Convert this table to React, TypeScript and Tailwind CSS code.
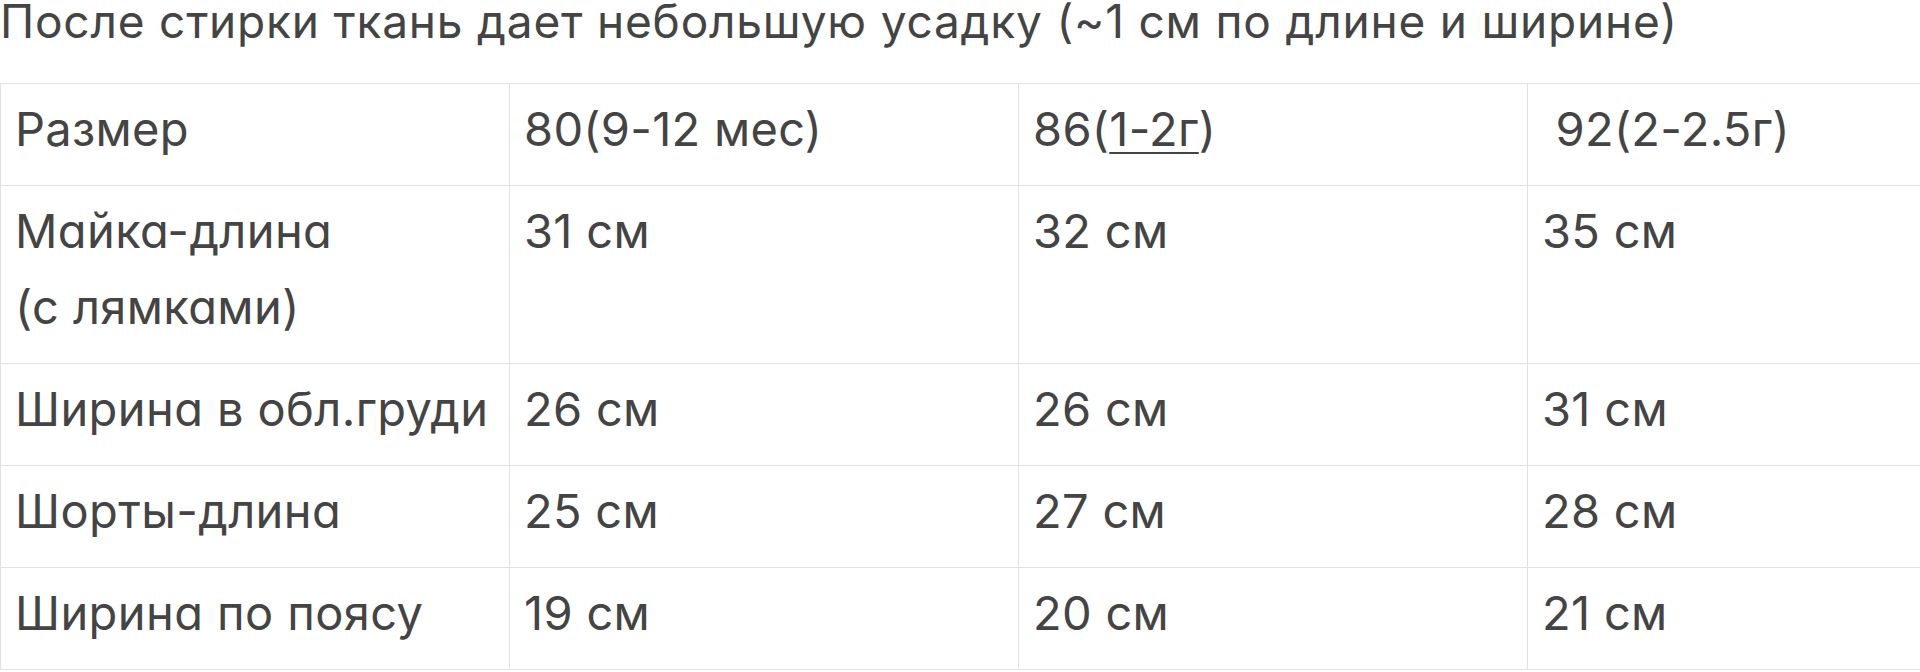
import React from "react";

const rows: { label: string; cells: React.ReactNode[] }[] = [
  { label: "Майка-длина\n(с лямками)", cells: ["31 см", "32 см", "35 см"] },
  { label: "Ширина в обл.груди", cells: ["26 см", "26 см", "31 см"] },
  { label: "Шорты-длина", cells: ["25 см", "27 см", "28 см"] },
  { label: "Ширина по поясу", cells: ["19 см", "20 см", "21 см"] },
];

export default function App() {
  const td = "border border-[#e2e2e2] align-top pl-[14px] pr-2 pt-[7px] pb-[18px] leading-[76px] whitespace-pre-line";
  return (
    <div
      className="w-[1920px] h-[672px] overflow-hidden bg-white text-[#444444]"
      style={{ fontFamily: "Inter, 'Liberation Sans', sans-serif" }}
    >
      <p className="text-[46px] tracking-[0.8px] leading-[42px] mb-[41px] whitespace-nowrap">
        После стирки ткань дает небольшую усадку (~1 см по длине и ширине)
      </p>
      <table className="border-collapse table-fixed w-[2036px] text-[47px] tracking-[0.3px]">
        <colgroup>
          <col className="w-[509px]" />
          <col className="w-[509px]" />
          <col className="w-[509px]" />
          <col className="w-[509px]" />
        </colgroup>
        <tbody>
          <tr>
            <td className={td}>Размер</td>
            <td className={td}>80(9-12 мес)</td>
            <td className={td}>
              86(<span className="underline decoration-2 underline-offset-[6px]">1-2г</span>)
            </td>
            <td className={td}>{"\u00a092(2-2.5г)"}</td>
          </tr>
          {rows.map((r) => (
            <tr key={r.label}>
              <td className={td + " tracking-[0.4px] [font-feature-settings:'cv11']"}>{r.label}</td>
              {r.cells.map((c, i) => (
                <td key={i} className={td}>
                  {c}
                </td>
              ))}
            </tr>
          ))}
        </tbody>
      </table>
    </div>
  );
}
